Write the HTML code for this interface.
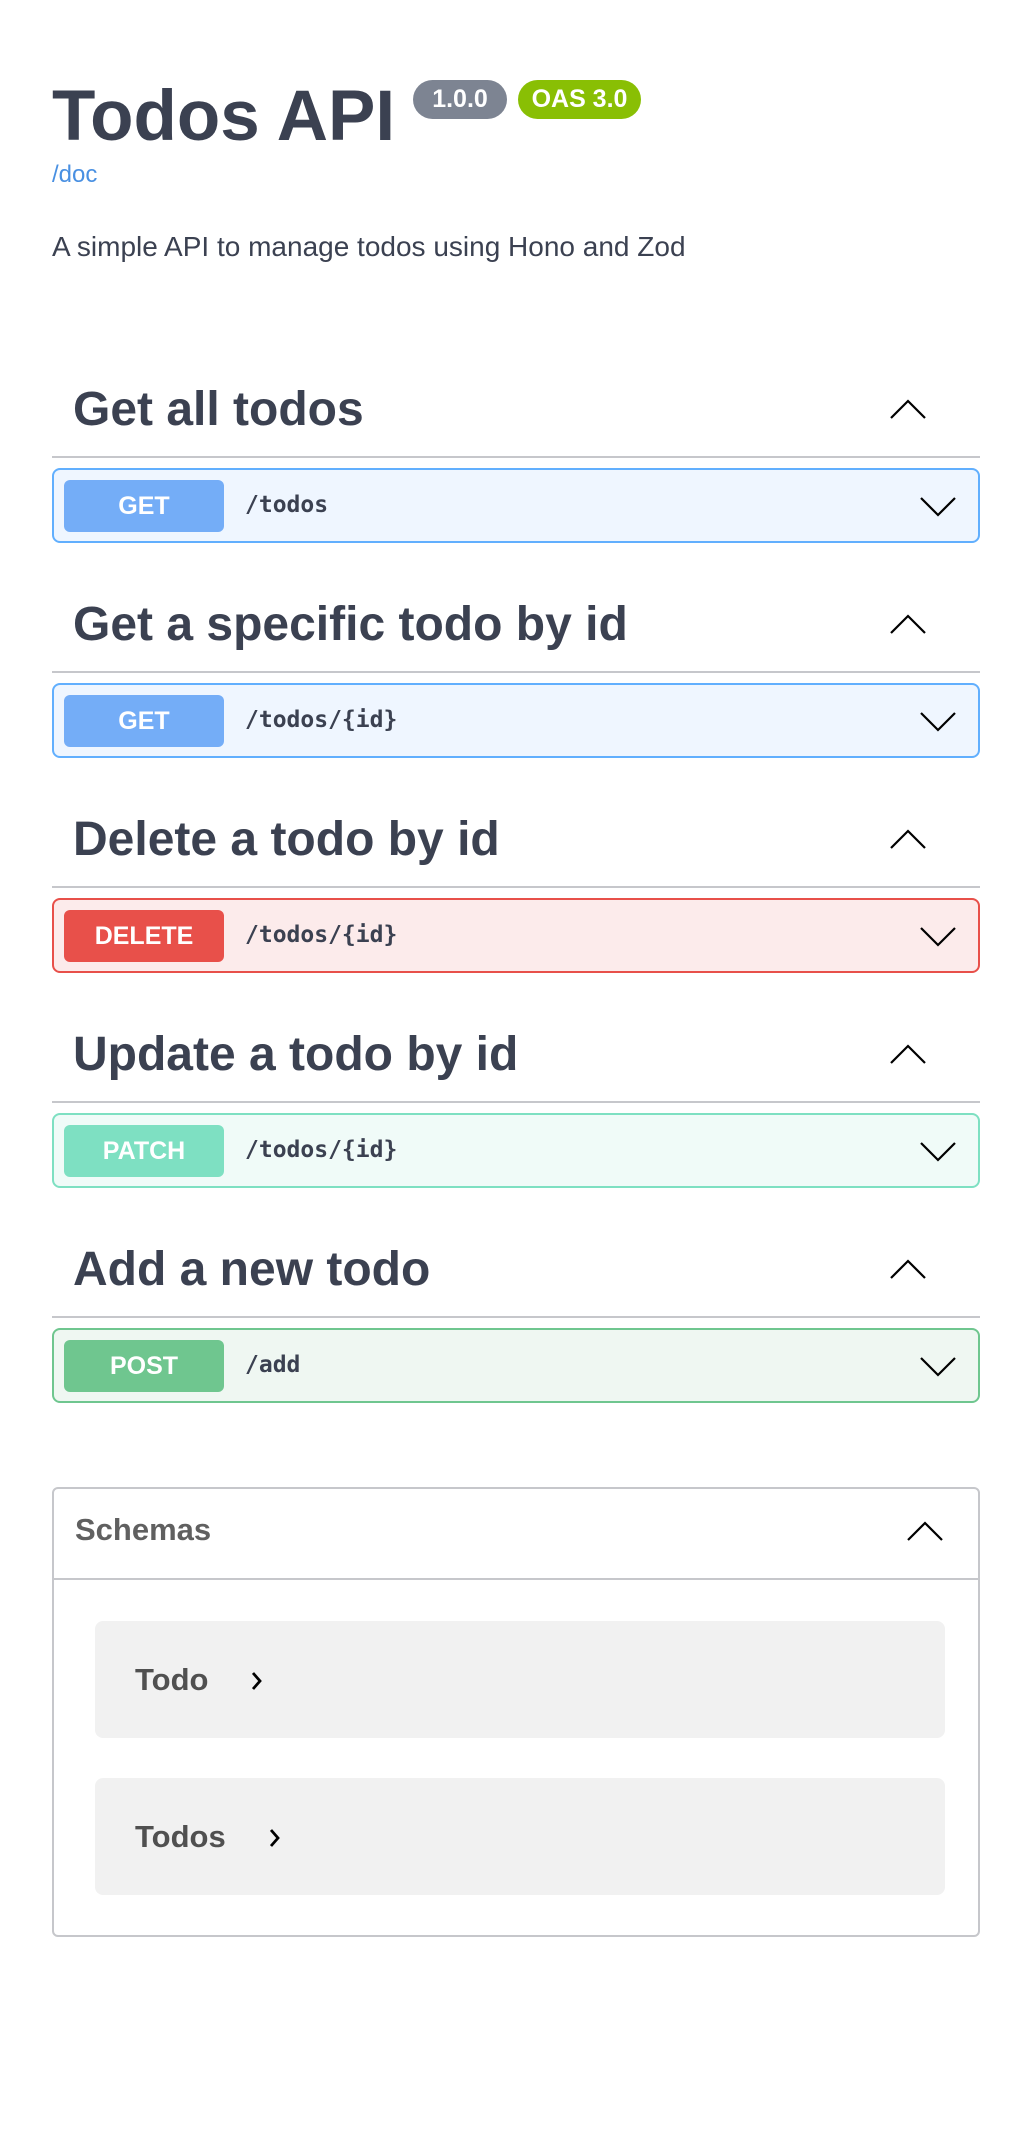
<!DOCTYPE html>
<html><head><meta charset="utf-8"><style>
*{margin:0;padding:0;box-sizing:border-box}
body{width:1036px;height:2148px;background:#fff;font-family:"Liberation Sans",sans-serif;color:#3b4151;position:relative;overflow:hidden}
.abs{position:absolute}
.title{left:52px;top:72px;font-size:71px;font-weight:bold;line-height:90px}
.badge{top:80px;height:39px;border-radius:20px;color:#fff;font-weight:bold;font-size:25px;line-height:39px;text-align:center}
.h{left:73px;font-size:48px;font-weight:bold;line-height:60px}
.line{left:52px;width:928px;height:2px;background:#c6c7cb}
.op{left:52px;width:928px;height:75px;border:2px solid;border-radius:8px}
.m{position:absolute;left:10px;top:10px;width:160px;height:52px;border-radius:6px;color:#fff;font-weight:bold;font-size:25px;line-height:52px;text-align:center}
.p{position:absolute;left:191px;top:0;line-height:70px;font-family:"DejaVu Sans Mono","Liberation Mono",monospace;font-weight:bold;font-size:23px;color:#3b4151}
.dn{position:absolute;left:865px;top:26px}
.up{left:889px}
.card{left:95px;width:850px;height:117px;background:#f1f1f1;border-radius:8px}
.card span{position:absolute;left:40px;top:0;line-height:117px;font-size:31px;font-weight:bold;color:#505050}
</style></head><body>
<div class="abs title">Todos API</div>
<div class="abs badge" style="left:413px;width:94px;background:#7d8492">1.0.0</div>
<div class="abs badge" style="left:518px;width:123px;background:#89bf04">OAS 3.0</div>
<div class="abs" style="left:52px;top:160px;font-size:24px;color:#4990e2;line-height:30px">/doc</div>
<div class="abs" style="left:52px;top:230px;font-size:28px;line-height:34px">A simple API to manage todos using Hono and Zod</div>

<div class="abs h" style="top:380px">Get all todos</div>
<svg class="abs up" style="top:398px" width="38" height="22"><path d="M2 20 L19 3 L36 20" fill="none" stroke="#000" stroke-width="2.2"/></svg>
<div class="abs line" style="top:456px"></div>
<div class="abs op" style="top:468px;border-color:#61affe;background:#eff6ff"><div class="m" style="background:#74adf7">GET</div><div class="p">/todos</div><svg class="dn" width="38" height="22"><path d="M2 2 L19 19 L36 2" fill="none" stroke="#000" stroke-width="2.2"/></svg></div>

<div class="abs h" style="top:595px">Get a specific todo by id</div>
<svg class="abs up" style="top:613px" width="38" height="22"><path d="M2 20 L19 3 L36 20" fill="none" stroke="#000" stroke-width="2.2"/></svg>
<div class="abs line" style="top:671px"></div>
<div class="abs op" style="top:683px;border-color:#61affe;background:#eff6ff"><div class="m" style="background:#74adf7">GET</div><div class="p">/todos/{id}</div><svg class="dn" width="38" height="22"><path d="M2 2 L19 19 L36 2" fill="none" stroke="#000" stroke-width="2.2"/></svg></div>

<div class="abs h" style="top:810px">Delete a todo by id</div>
<svg class="abs up" style="top:828px" width="38" height="22"><path d="M2 20 L19 3 L36 20" fill="none" stroke="#000" stroke-width="2.2"/></svg>
<div class="abs line" style="top:886px"></div>
<div class="abs op" style="top:898px;border-color:#e8504a;background:#fcebeb"><div class="m" style="background:#e8504a">DELETE</div><div class="p">/todos/{id}</div><svg class="dn" width="38" height="22"><path d="M2 2 L19 19 L36 2" fill="none" stroke="#000" stroke-width="2.2"/></svg></div>

<div class="abs h" style="top:1025px">Update a todo by id</div>
<svg class="abs up" style="top:1043px" width="38" height="22"><path d="M2 20 L19 3 L36 20" fill="none" stroke="#000" stroke-width="2.2"/></svg>
<div class="abs line" style="top:1101px"></div>
<div class="abs op" style="top:1113px;border-color:#7ee0c2;background:#f0fbf8"><div class="m" style="background:#7ee0c2">PATCH</div><div class="p">/todos/{id}</div><svg class="dn" width="38" height="22"><path d="M2 2 L19 19 L36 2" fill="none" stroke="#000" stroke-width="2.2"/></svg></div>

<div class="abs h" style="top:1240px">Add a new todo</div>
<svg class="abs up" style="top:1258px" width="38" height="22"><path d="M2 20 L19 3 L36 20" fill="none" stroke="#000" stroke-width="2.2"/></svg>
<div class="abs line" style="top:1316px"></div>
<div class="abs op" style="top:1328px;border-color:#6fc68f;background:#eff7f2"><div class="m" style="background:#6fc68f">POST</div><div class="p">/add</div><svg class="dn" width="38" height="22"><path d="M2 2 L19 19 L36 2" fill="none" stroke="#000" stroke-width="2.2"/></svg></div>

<div class="abs" style="left:52px;top:1487px;width:928px;height:450px;border:2px solid #c6c7cb;border-radius:6px"></div>
<div class="abs" style="left:75px;top:1510px;font-size:31px;font-weight:bold;color:#606060;line-height:40px">Schemas</div>
<svg class="abs" style="left:906px;top:1520px" width="38" height="22"><path d="M2 20 L19 3 L36 20" fill="none" stroke="#000" stroke-width="2.2"/></svg>
<div class="abs" style="left:52px;top:1578px;width:928px;height:2px;background:#c6c7cb"></div>
<div class="abs card" style="top:1621px"><span>Todo</span><svg style="position:absolute;left:155px;top:50px" width="14" height="20"><path d="M3 2 L10 10 L3 18" fill="none" stroke="#000" stroke-width="2.8"/></svg></div>
<div class="abs card" style="top:1778px"><span>Todos</span><svg style="position:absolute;left:173px;top:50px" width="14" height="20"><path d="M3 2 L10 10 L3 18" fill="none" stroke="#000" stroke-width="2.8"/></svg></div>
</body></html>
